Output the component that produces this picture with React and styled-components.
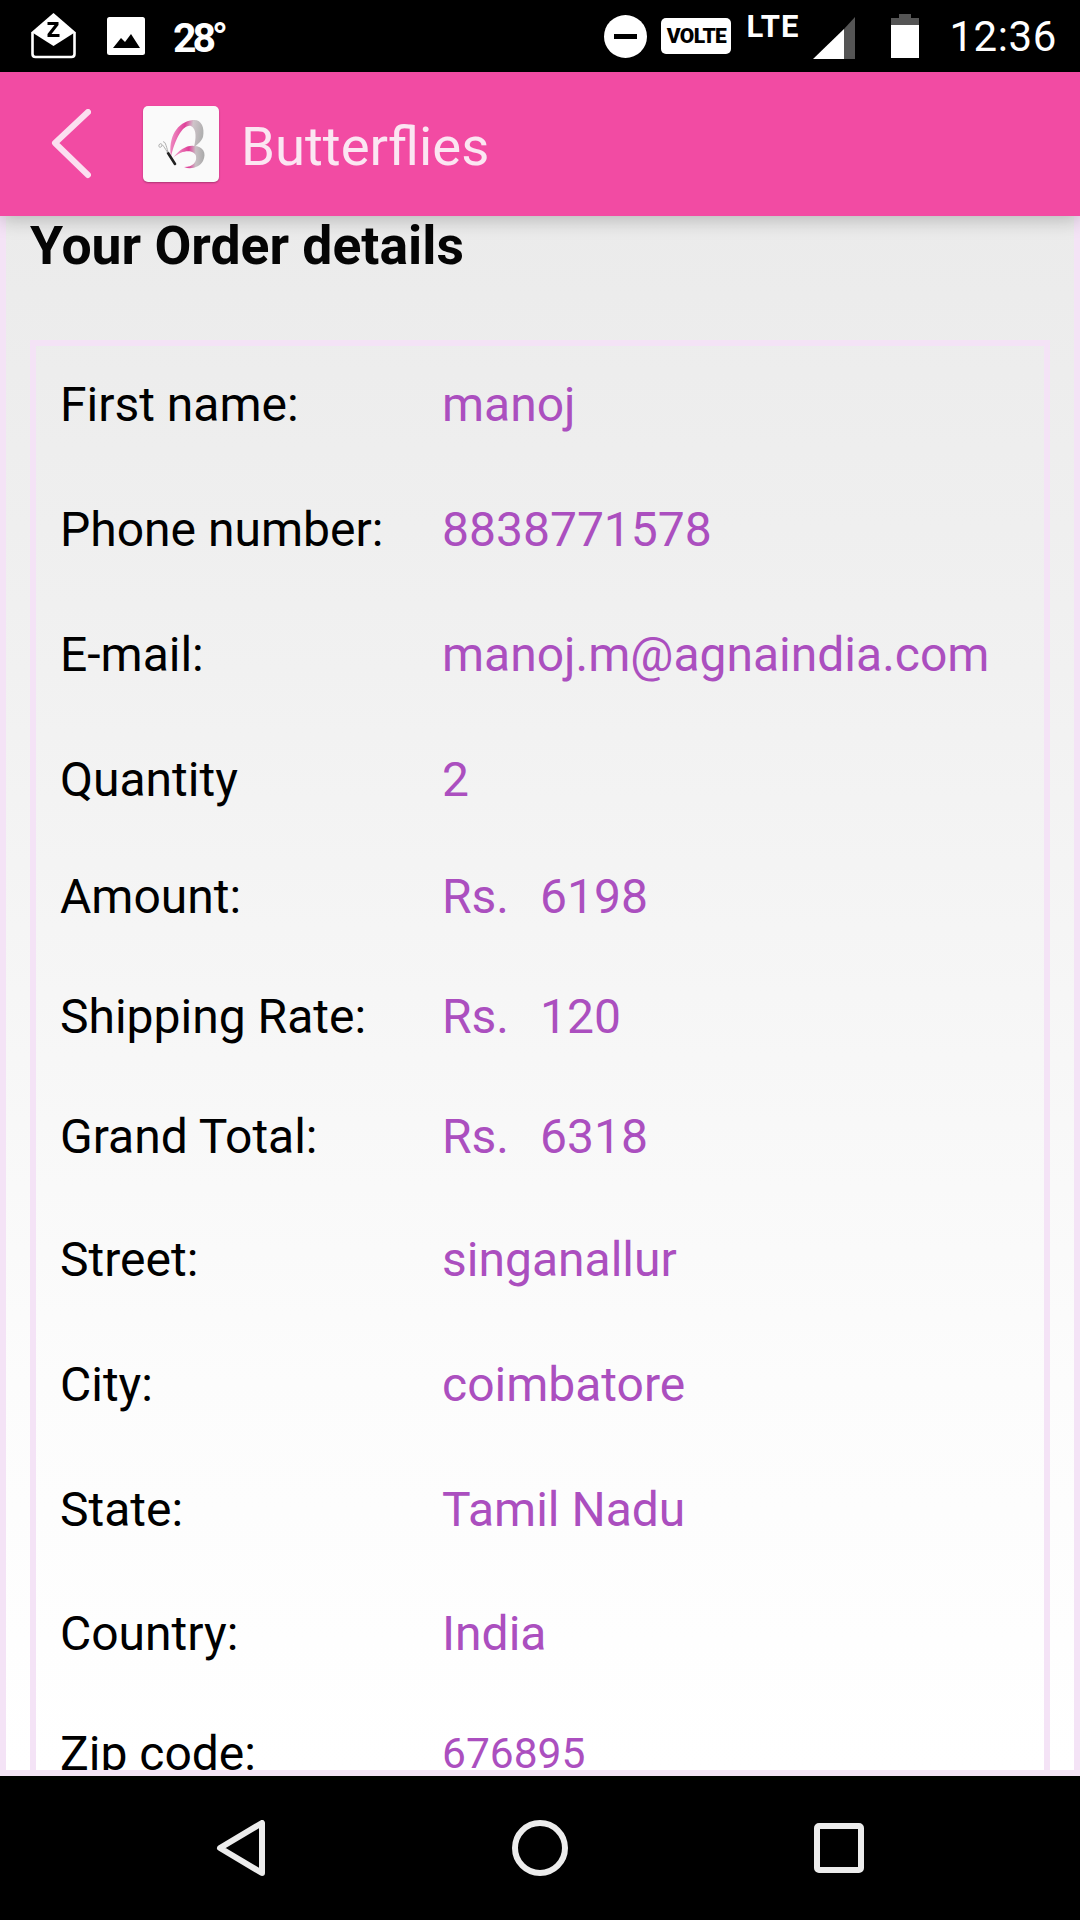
import React from 'react';
import styled, { createGlobalStyle } from 'styled-components';

const GlobalStyle = createGlobalStyle`
  html, body {
    margin: 0;
    padding: 0;
    background: #000;
  }
  * {
    box-sizing: border-box;
  }
`;

const rows = [
  { label: 'First name:', value: 'manoj', height: 125 },
  { label: 'Phone number:', value: '8838771578', height: 125 },
  { label: 'E-mail:', value: 'manoj.m@agnaindia.com', height: 125 },
  { label: 'Quantity', value: '2', height: 117 },
  { label: 'Amount:', value: '6198', money: true, height: 120 },
  { label: 'Shipping Rate:', value: '120', money: true, height: 120 },
  { label: 'Grand Total:', value: '6318', money: true, height: 123 },
  { label: 'Street:', value: 'singanallur', height: 125 },
  { label: 'City:', value: 'coimbatore', height: 125 },
  { label: 'State:', value: 'Tamil Nadu', height: 124 },
  { label: 'Country:', value: 'India', height: 120 },
  { label: 'Zip code:', value: '676895', small: true, height: 80 },
];

const App = () => {
  return (
    <Screen>
      <GlobalStyle />
      <StatusBar>
        <MailIcon />
        <ImageIcon />
        <Temp>28°</Temp>
        <Spacer />
        <DndIcon />
        <Volte>VOLTE</Volte>
        <Lte>LTE</Lte>
        <SignalIcon />
        <BatteryIcon />
        <Clock>12:36</Clock>
      </StatusBar>
      <AppBar>
        <BackIcon />
        <LogoBox>
          <ButterflyLogo />
        </LogoBox>
        <AppTitle>Butterflies</AppTitle>
      </AppBar>
      <Content>
        <Heading>Your Order details</Heading>
        <DetailsBox>
          {rows.map((row) => (
            <Row key={row.label} $height={row.height}>
              <Label>{row.label}</Label>
              <Value $small={row.small}>
                {row.money && <Currency>Rs.</Currency>}
                {row.value}
              </Value>
            </Row>
          ))}
        </DetailsBox>
      </Content>
      <NavBar>
        <NavBackIcon />
        <NavHomeIcon />
        <NavRecentIcon />
      </NavBar>
    </Screen>
  );
};

const MailIcon = () => (
  <MailSvg viewBox="0 0 46 46" width="47" height="46">
    <path d="M2 19 V41 Q2 44 5 44 H41 Q44 44 44 41 V19" fill="none" stroke="#fff" strokeWidth="2.6" />
    <path d="M1 19 L23 0 L45 19 L23 33 Z" fill="#fff" />
    <path d="M17 9 H28 V12 L21 21 H29 V24 H17 V21 L24 12 H17 Z" fill="#000" />
  </MailSvg>
);

const ImageIcon = () => (
  <ImageSvg viewBox="0 0 38 38" width="38" height="38">
    <rect width="38" height="38" rx="2.5" fill="#fff" />
    <path d="M6 31 L14 21 L18 25 L24 17 L33 31 Z" fill="#000" />
  </ImageSvg>
);

const DndIcon = () => (
  <DndSvg viewBox="0 0 43 43" width="43" height="43">
    <circle cx="21.5" cy="21.5" r="21.5" fill="#fff" />
    <rect x="10" y="19" width="23" height="5" fill="#000" />
  </DndSvg>
);

const SignalIcon = () => (
  <SignalSvg viewBox="0 0 42 42" width="42" height="42">
    <path d="M0 42 L31 12 V42 Z" fill="#fff" />
    <path d="M31 12 L42 0 V42 H31 Z" fill="#555" />
  </SignalSvg>
);

const BatteryIcon = () => (
  <BatterySvg viewBox="0 0 28 44" width="28" height="44">
    <path d="M8 0 H20 V4 H28 V11 H0 V4 H8 Z" fill="#555" />
    <rect y="11" width="28" height="33" fill="#fff" />
  </BatterySvg>
);

const BackIcon = () => (
  <BackSvg viewBox="0 0 40 70" width="40" height="70">
    <path d="M37 3 L4 34 L37 66" fill="none" stroke="#fbdff0" strokeWidth="6" strokeLinecap="round" strokeLinejoin="round" />
  </BackSvg>
);

const ButterflyLogo = () => (
  <svg viewBox="13 11 74 76" width="76" height="76">
    <defs>
      <linearGradient id="wingTop" x1="0" y1="0" x2="1" y2="0.2">
        <stop offset="0" stopColor="#f4a9d0" />
        <stop offset="0.45" stopColor="#e0409a" />
        <stop offset="0.68" stopColor="#d0c4ca" />
        <stop offset="1" stopColor="#b0b0b0" />
      </linearGradient>
      <linearGradient id="wingBottom" x1="0" y1="0" x2="1" y2="0">
        <stop offset="0" stopColor="#f4a9d0" />
        <stop offset="0.5" stopColor="#df3f98" />
        <stop offset="0.72" stopColor="#c8c0c4" />
        <stop offset="1" stopColor="#a8a8a8" />
      </linearGradient>
    </defs>
    <path d="M40 62 C37 42 46 27 62 25 C70 24 74 32 72 42 C70 47 67 49 63 52 C65 44 66 34 60 31 C52 29 44 44 40 62 Z" fill="url(#wingTop)" />
    <path d="M42 63 C48 55 56 50 63 51 C72 51 76 58 72 66 C69 72 60 75 53 72 C62 72 66 67 65 61 C63 55 52 54 42 63 Z" fill="url(#wingBottom)" />
    <path d="M37 58 L44 69" stroke="#222" strokeWidth="2.6" strokeLinecap="round" />
    <path d="M37 58 C33 52 30 46 28 50 C27 53 31 53 31 50 M37 57 C35 50 34 46 32 47" fill="none" stroke="#999" strokeWidth="0.8" />
  </svg>
);

const NavBackIcon = () => (
  <svg viewBox="0 0 50 56" width="50" height="56">
    <path d="M46 3 V53 L4 28 Z" fill="none" stroke="#ececec" strokeWidth="6" strokeLinejoin="round" />
  </svg>
);

const NavHomeIcon = () => (
  <svg viewBox="0 0 56 56" width="56" height="56">
    <circle cx="28" cy="28" r="25" fill="none" stroke="#ececec" strokeWidth="6" />
  </svg>
);

const NavRecentIcon = () => (
  <svg viewBox="0 0 50 50" width="50" height="50">
    <rect x="3" y="3" width="44" height="44" rx="2" fill="none" stroke="#ececec" strokeWidth="6" />
  </svg>
);

const Screen = styled.div`
  width: 1080px;
  height: 1920px;
  display: flex;
  flex-direction: column;
  overflow: hidden;
  font-family: Roboto, "Liberation Sans", sans-serif;
`;

const StatusBar = styled.div`
  height: 72px;
  flex-shrink: 0;
  background: #000;
  color: #fff;
  display: flex;
  align-items: flex-start;
  padding-left: 30px;
`;

const Spacer = styled.div`
  flex: 1;
`;

const MailSvg = styled.svg`
  margin-top: 13px;
`;

const ImageSvg = styled.svg`
  margin: 17px 0 0 30px;
`;

const Temp = styled.div`
  margin: 16px 0 0 28px;
  font-size: 41px;
  line-height: 44px;
  font-weight: 700;
  letter-spacing: -4px;
`;

const DndSvg = styled.svg`
  margin-top: 15px;
`;

const Volte = styled.div`
  margin: 18px 0 0 14px;
  width: 70px;
  height: 36px;
  background: #fff;
  color: #000;
  border-radius: 5px;
  font-size: 21px;
  line-height: 36px;
  font-weight: 900;
  text-align: center;
  letter-spacing: -0.6px;
`;

const Lte = styled.div`
  margin: 10px 0 0 15px;
  font-size: 31px;
  line-height: 34px;
  font-weight: 700;
  letter-spacing: 1px;
`;

const SignalSvg = styled.svg`
  margin: 17px 0 0 14px;
`;

const BatterySvg = styled.svg`
  margin: 14px 0 0 36px;
`;

const Clock = styled.div`
  margin: 13px 23px 0 30px;
  font-size: 42px;
  line-height: 48px;
  letter-spacing: 0.6px;
`;

const AppBar = styled.header`
  position: relative;
  z-index: 1;
  height: 144px;
  flex-shrink: 0;
  background: #f24ba3;
  display: flex;
  align-items: center;
  padding-left: 51px;
  box-shadow: 0 4px 18px rgba(0, 0, 0, 0.22);
`;

const BackSvg = styled.svg`
  margin-right: 52px;
`;

const LogoBox = styled.div`
  width: 76px;
  height: 76px;
  background: #fafafa;
  border-radius: 5px;
  box-shadow: 0 1px 2px rgba(0, 0, 0, 0.3);
  display: flex;
`;

const AppTitle = styled.div`
  margin: 4px 0 0 22px;
  font-size: 54.5px;
  line-height: 60px;
  font-weight: 400;
  color: #fbe6f2;
`;

const Content = styled.main`
  flex: 1;
  min-height: 0;
  overflow: hidden;
  display: flex;
  flex-direction: column;
  background: linear-gradient(#ebebeb 0, #f0f0f0 25%, #fcfcfc 75%, #fff 100%);
  border: 6px solid #f4e3f6;
  border-top: none;
`;

const Heading = styled.h1`
  margin: 0;
  padding: 0 0 0 24px;
  height: 124px;
  flex-shrink: 0;
  font-size: 53.5px;
  line-height: 60px;
  font-weight: 700;
  color: #050505;
`;

const DetailsBox = styled.section`
  margin: 0 24px;
  padding: 31px 0 0 24px;
  border: 6px solid #f4e3f6;
  border-bottom: none;
  flex: 1 0 auto;
`;

const Row = styled.div`
  display: flex;
  height: ${(props) => props.$height}px;
`;

const Label = styled.div`
  width: 382px;
  font-size: 48px;
  line-height: 56px;
  color: #000;
`;

const Value = styled.div`
  display: flex;
  font-size: ${(props) => (props.$small ? 42.5 : 48)}px;
  line-height: 56px;
  color: #ab4fbf;
`;

const Currency = styled.span`
  width: 98px;
`;

const NavBar = styled.nav`
  height: 144px;
  flex-shrink: 0;
  background: #000;
  display: flex;
  align-items: center;
  justify-content: center;
  gap: 246px;
`;

export default App;
